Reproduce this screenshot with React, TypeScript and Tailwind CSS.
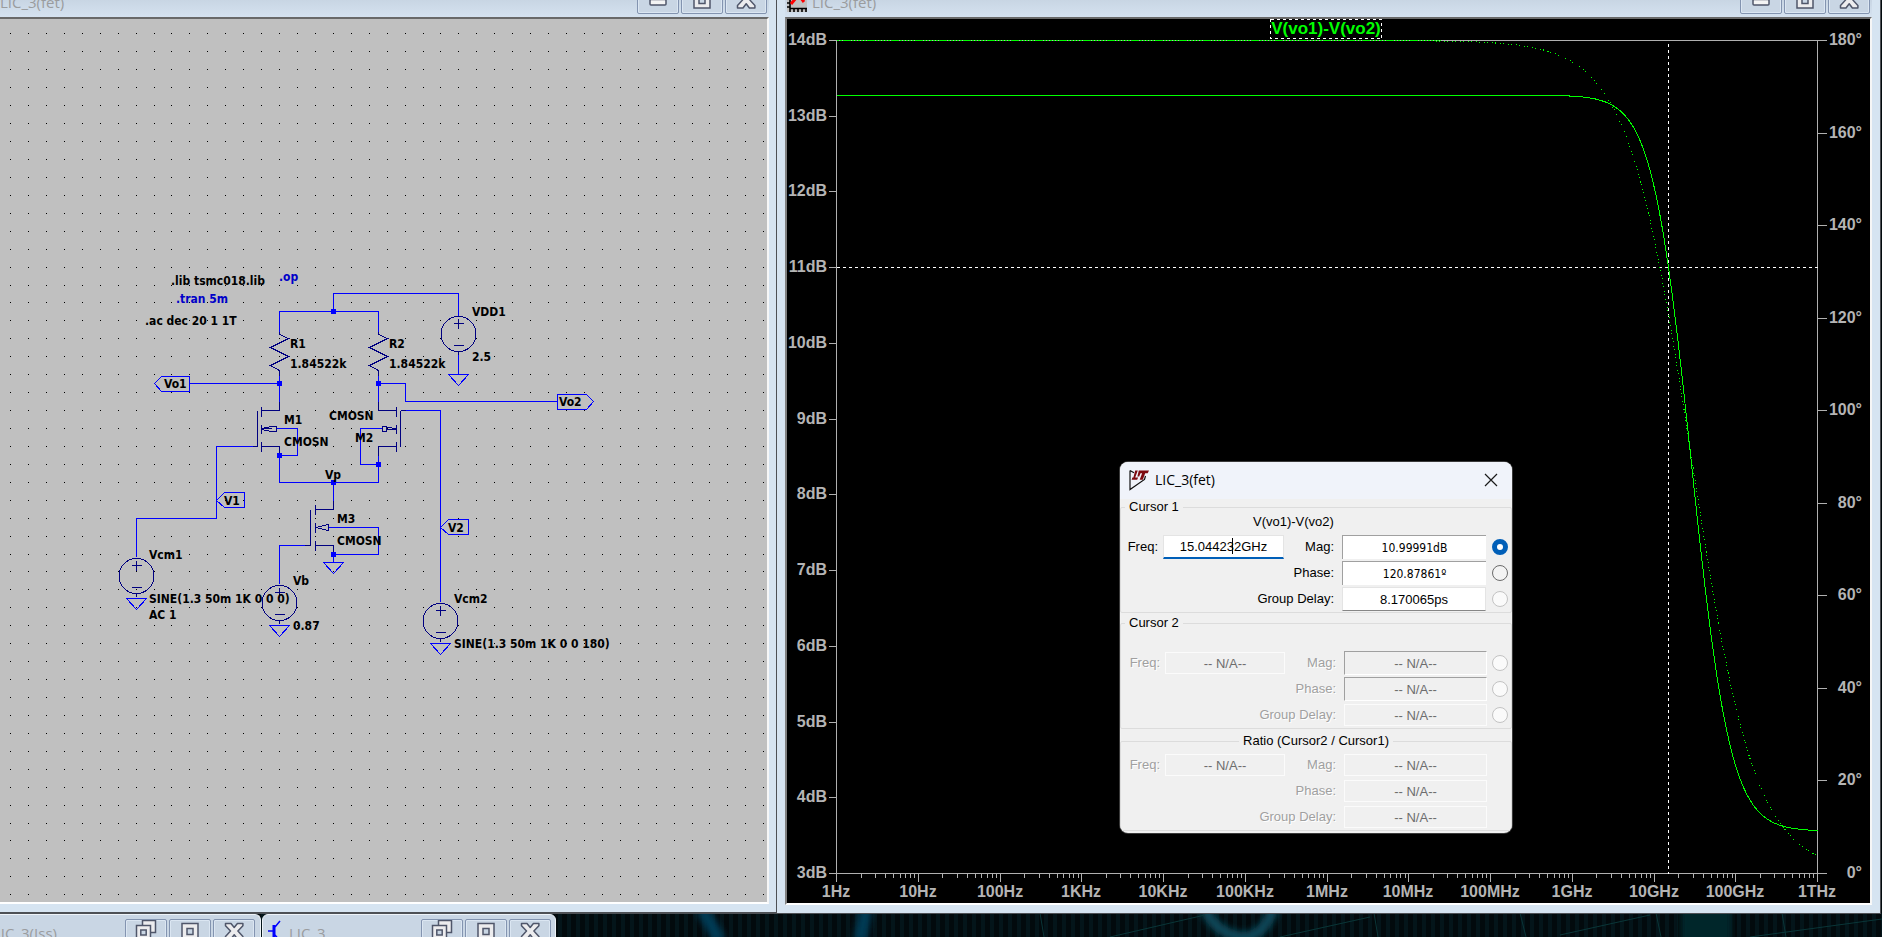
import React from "react";

/* ---------- window chrome ---------- */

type Glyph = "min" | "max" | "close" | "restore";

function CaptionGlyph({ kind }: { kind: Glyph }) {
  return (
    <svg width="20" height="22" viewBox="0 0 20 22" className="block overflow-visible" aria-hidden="true">
      {kind === "min" && <rect x="2" y="9.5" width="16" height="5.5" rx="1" fill="#f4f4f4" stroke="#4f566a" strokeWidth="1.5" />}
      {kind === "max" && (
        <g fill="#ececee" stroke="#4f566a" strokeWidth="1.5">
          <path fillRule="evenodd" d="M2 2.5h16v15.5h-16zM7 7.5v6h6v-6z" />
        </g>
      )}
      {kind === "restore" && (
        <g fill="#ececee" stroke="#4f566a" strokeWidth="1.5">
          <path d="M6.5 -0.5h13v12h-13z" />
          <path d="M0.5 4.5h14v14h-14z" />
          <path d="M4.8 9h5.4v5h-5.4z" fill="#c9d6e4" />
        </g>
      )}
      {kind === "close" && (
        <path
          d="M1.5 2.5h5.5l3.2 4 3.2-4h5.5v2.2l-5 5.4 5 5.4v2.5h-5.5l-3.2-4.2-3.2 4.2h-5.5v-2.5l5-5.4-5-5.4z"
          fill="#ececee"
          stroke="#4f566a"
          strokeWidth="1.5"
          strokeLinejoin="round"
        />
      )}
    </svg>
  );
}

function CaptionButtons({ kinds }: { kinds: Glyph[] }) {
  return (
    <div className="mr-[2px] mt-1 flex shrink-0 gap-[2px]">
      {kinds.map((k) => (
        <button
          key={k}
          type="button"
          aria-label={k}
          className="flex h-[26px] w-[42px] items-center justify-center overflow-hidden rounded-[2px] border border-[#8394b0] bg-[#c9d6e4] shadow-[inset_0_0_0_1px_#dbe6f2]"
        >
          <CaptionGlyph kind={k} />
        </button>
      ))}
    </div>
  );
}

function TitleText({ children }: { children: React.ReactNode }) {
  return (
    <span className="grow whitespace-nowrap pt-2 font-['Open_Sans',sans-serif] text-[15px] leading-5 text-[#9a9c9e]">
      {children}
    </span>
  );
}

function PlotIcon() {
  return (
    <svg width="20" height="20" viewBox="0 0 20 20" className="mt-2 block shrink-0" aria-hidden="true">
      <rect x="0" y="0" width="20" height="20" fill="#c0c0c0" />
      <path d="M3 0v17M3 16.5h17M0 3h3M0 7h3M0 11h3M0 15h3M3 16v4M7 16v4M11 16v4M15 16v4M19 16v4" stroke="#000" strokeWidth="1.6" />
      <path d="M4 12l5-6h5l3 4" stroke="#f00" strokeWidth="3" fill="none" />
    </svg>
  );
}

function TransistorIcon() {
  return (
    <svg width="16" height="22" viewBox="0 0 16 22" className="mt-1 block shrink-0" aria-hidden="true">
      <path d="M0 12h5M7 8l5-6M7 16l5 6" stroke="#00f" strokeWidth="1.5" fill="none" />
      <path d="M6 6v12" stroke="#00f" strokeWidth="3" />
    </svg>
  );
}

/* ---------- schematic ---------- */

const PITCH = 17.934;
const gridX = Array.from({ length: 43 }, (_, i) => Math.round(10.05 + PITCH * i));
const gridY = Array.from({ length: 49 }, (_, i) => Math.round(33.43 + PITCH * i));
const gridDots = gridY.map((y) => gridX.map((x) => `M${x} ${y}h1v1h-1z`).join("")).join("");

const wires = [
  "M333 311V293H458V316",
  "M279 331V311H378V331",
  "M458 354V374",
  "M189 383H279V401",
  "M279 374V383M378 374V401M378 383H405V401H557",
  "M257 446H216V518H136V556",
  "M276 428H297V455H279V482H378V464H360V428H382",
  "M400 410H440V601",
  "M333 482V500M310 545H279V583",
  "M328 527H378V554H333V562",
  "M378 455V464",
];

const parts = [
  "M279 331V334L288 338L270 347L288 356L270 365L279 370V375",
  "M378 331V334L387 338L369 347L387 356L369 365L378 370V375",
  "M279 401V410H261M261 406V416M261 424V433M261 441V451M261 446H279V455M257 410V446H252",
  "M261 428H271M261 428L271 426H276V431H271L261 429",
  "M378 401V410H396M396 406V416M396 424V433M396 441V451M396 446H378V455M400 410V446M400 410H405",
  "M396 428L386 427H391M386 426H382V431H386ZM386 429H396",
  "M333 500V509H315M315 504V514M315 522V532M315 540V550M315 545H333V554M310 509V545H304",
  "M315 527L328 524V530Z",
];

const flags = [
  "M154 383L161 376H189V391H161Z",
  "M216 500L224 492H244V507H224Z",
  "M440 527L448 519H468V534H448Z",
  "M557 394H586L593 401L586 409H557Z",
];

const junctions = [
  [333, 311],
  [279, 383],
  [378, 383],
  [279, 455],
  [378, 464],
  [333, 482],
  [333, 554],
];

const sources = [
  { x: 458, y: 333.5, g: 374 },
  { x: 136, y: 575.5, g: 598 },
  { x: 279, y: 602.5, g: 625 },
  { x: 440, y: 620.5, g: 643 },
];

const labels: [number, number, string, string?][] = [
  [171, 285, ".lib tsmc018.lib"],
  [279, 281, ".op", "#0000c8"],
  [176, 303, ".tran 5m", "#0000c8"],
  [145, 325, ".ac dec 20 1 1T"],
  [472, 316, "VDD1"],
  [472, 361, "2.5"],
  [290, 348, "R1"],
  [290, 368, "1.84522k"],
  [389, 348, "R2"],
  [389, 368, "1.84522k"],
  [164, 388, "Vo1"],
  [559, 406, "Vo2"],
  [329, 420, "CMOSN"],
  [284, 424, "M1"],
  [284, 446, "CMOSN"],
  [355, 442, "M2"],
  [325, 479, "Vp"],
  [224, 505, "V1"],
  [448, 532, "V2"],
  [337, 523, "M3"],
  [337, 545, "CMOSN"],
  [149, 559, "Vcm1"],
  [149, 603, "SINE(1.3 50m 1K 0 0 0)"],
  [149, 619, "AC 1"],
  [293, 585, "Vb"],
  [293, 630, "0.87"],
  [454, 603, "Vcm2"],
  [454, 648, "SINE(1.3 50m 1K 0 0 180)"],
];

function Schematic() {
  return (
    <svg viewBox="0 19 767 884" preserveAspectRatio="xMinYMin slice" className="block h-full w-full" role="img" aria-label="Schematic">
      <path d={gridDots} fill="#000" shapeRendering="crispEdges" />
      <g transform="translate(0.5 0.5)" fill="none" strokeWidth="1" shapeRendering="crispEdges">
        <path d={wires.join("")} stroke="#0000ff" />
        <path d={flags.join("")} stroke="#0000ff" />
        <path d={parts.join("")} stroke="#000080" />
        {sources.map((s) => (
          <g key={s.x} stroke="#000080">
            <circle cx={s.x} cy={s.y} r="17.5" />
            <path d={`M${s.x - 5} ${Math.floor(s.y) - 10}h10m-5 -5v10M${s.x - 5} ${Math.floor(s.y) + 12}h10M${s.x} ${s.y + 17}v4`} />
          </g>
        ))}
        {[...sources.map((s) => [s.x, s.g]), [333, 562]].map(([x, y]) => (
          <path key={`${x}-${y}`} d={`M${x - 10} ${y}h20l-10 11z`} stroke="#0000ff" />
        ))}
      </g>
      {junctions.map(([x, y]) => (
        <rect key={`${x}-${y}`} x={x - 2} y={y - 2} width="5" height="5" fill="#0000ff" />
      ))}
      <g className="font-['DejaVu_Sans_Condensed','DejaVu_Sans',sans-serif] text-[12px] font-bold">
        {labels.map(([x, y, t, c], i) => (
          <text key={i} x={x} y={y} fill={c ?? "#000"}>
            {t}
          </text>
        ))}
      </g>
    </svg>
  );
}

/* ---------- frequency response plot ---------- */

const PLOT = { left: 836, right: 1817, top: 40, bottom: 873 };
const DECADES = 12;
const freqLabels = ["1Hz", "10Hz", "100Hz", "1KHz", "10KHz", "100KHz", "1MHz", "10MHz", "100MHz", "1GHz", "10GHz", "100GHz", "1THz"];
const magLabels = Array.from({ length: 12 }, (_, i) => 14 - i);
const phaseLabels = Array.from({ length: 10 }, (_, i) => 180 - 20 * i);

const POLE = 16.39e9;
const ZERO = 50.2e9;
const DC_GAIN = 13.28;

const xOf = (decade: number) => PLOT.left + ((PLOT.right - PLOT.left) * decade) / DECADES;
const magY = (db: number) => PLOT.top + ((14 - db) * (PLOT.bottom - PLOT.top)) / 11;
const phaseY = (deg: number) => PLOT.top + ((180 - deg) * (PLOT.bottom - PLOT.top)) / 180;

function curve(value: (f: number) => number) {
  const points: string[] = [];
  for (let x = PLOT.left; x <= PLOT.right; x += 1) {
    const f = Math.pow(10, ((x - PLOT.left) / (PLOT.right - PLOT.left)) * DECADES);
    points.push(`${x},${value(f).toFixed(1)}`);
  }
  return points.join(" ");
}

const magCurve = curve((f) => magY(DC_GAIN + 10 * Math.log10((1 + (f / ZERO) ** 2) / (1 + (f / POLE) ** 2))));
const phaseCurve = curve((f) => phaseY(180 - ((Math.atan(f / ZERO) + Math.atan(f / POLE)) * 180) / Math.PI));

function minorTicks() {
  let d = "";
  for (let k = 0; k < DECADES; k += 1) {
    for (let n = 2; n < 10; n += 1) d += `M${Math.round(xOf(k + Math.log10(n)))} ${PLOT.bottom}v4`;
  }
  return d;
}

function Plot() {
  return (
    <svg viewBox="787 19 1083 884" preserveAspectRatio="xMinYMin meet" className="block h-full w-full" role="img" aria-label="V(vo1)-V(vo2) frequency response">
      <g transform="translate(0.5 0.5)" fill="none" stroke="#b0b0b0" shapeRendering="crispEdges">
        <path d={`M${PLOT.left} ${PLOT.top}H${PLOT.right}V${PLOT.bottom}H${PLOT.left}Z`} />
        <path d={magLabels.map((m) => `M828 ${Math.round(magY(m))}H836`).join("")} />
        <path d={phaseLabels.map((p) => `M1817 ${Math.round(phaseY(p))}H1826`).join("")} />
        <path d={freqLabels.map((_, i) => `M${Math.round(xOf(i))} ${PLOT.bottom}v8`).join("")} />
        <path d={minorTicks()} />
        <path d={`M1668 43V${PLOT.bottom}`} stroke="#fff" strokeDasharray="3 3" />
        <path d={`M${PLOT.left} 267H${PLOT.right}`} stroke="#fff" strokeDasharray="3 3" />
        <polyline points={phaseCurve} stroke="#00ff00" strokeDasharray="1 2 1 4" />
        <path d={`M${PLOT.left} ${PLOT.top}H1440`} stroke="#00ff00" strokeDasharray="2 1" />
        <polyline points={magCurve} stroke="#00ff00" />
        <rect x="1270" y="19" width="111" height="19" stroke="#fff" strokeDasharray="3 3" />
      </g>
      <g className="font-['Liberation_Sans',Arial,sans-serif] text-[16px] font-bold" fill="#b4b4b4">
        {magLabels.map((m) => (
          <text key={m} x="827" y={Math.round(magY(m)) + 5} textAnchor="end">
            {m}dB
          </text>
        ))}
        {phaseLabels.map((p) => (
          <text key={p} x="1862" y={Math.round(phaseY(p)) + 5} textAnchor="end">
            {p}°
          </text>
        ))}
        {freqLabels.map((t, i) => (
          <text key={t} x={Math.round(xOf(i))} y="897" textAnchor="middle">
            {t}
          </text>
        ))}
        <text x="1326" y="34" textAnchor="middle" fill="#00ff00" className="text-[17px]">
          V(vo1)-V(vo2)
        </text>
      </g>
    </svg>
  );
}

/* ---------- cursor dialog ---------- */

const NA = "-- N/A--";

type FieldStyle = "focus" | "sunken" | "flat" | "sunkenOff" | "flatOff";

const fieldStyles: Record<FieldStyle, string> = {
  focus: "h-6 bg-white border border-[#e4e4e4] border-b-2 border-b-[#005fb8] text-black text-[13px] font-['Liberation_Sans',Arial,sans-serif]",
  sunken: "h-6 bg-white border-t border-l border-t-[#a0a0a0] border-l-[#a0a0a0] text-black text-[12px] font-['DejaVu_Sans_Condensed','DejaVu_Sans',sans-serif]",
  flat: "h-6 bg-white border border-[#e4e4e4] border-b-[#868686] text-black text-[13px] font-['Liberation_Sans',Arial,sans-serif]",
  sunkenOff:
    "h-6 bg-[#f0f0f0] border border-white border-t-[#a0a0a0] border-l-[#a0a0a0] text-[#6d6d6d] text-[13px] font-['Liberation_Sans',Arial,sans-serif]",
  flatOff: "h-[22px] bg-[#f0f0f0] border border-[#fbfbfb] text-[#6d6d6d] text-[13px] font-['Liberation_Sans',Arial,sans-serif]",
};

function Field({ id, value, look }: { id: string; value: string; look: FieldStyle }) {
  const off = look === "flatOff" || look === "sunkenOff";
  return (
    <input
      id={id}
      type="text"
      defaultValue={value}
      disabled={off}
      className={`w-full min-w-0 rounded-none text-center outline-none ${fieldStyles[look]}`}
    />
  );
}

function Label({ htmlFor, off, children }: { htmlFor: string; off: boolean; children: React.ReactNode }) {
  return (
    <label
      htmlFor={htmlFor}
      className={
        off
          ? "whitespace-nowrap pr-2 text-right text-[#a0a0a0] [text-shadow:1px_1px_0_#fff]"
          : "whitespace-nowrap pr-2 text-right text-black"
      }
    >
      {children}
    </label>
  );
}

type Group = {
  id: string;
  legend: string;
  centered?: boolean;
  heading?: string;
  off: boolean;
  freq: string;
  freqLook: FieldStyle;
  rows: { name: string; value: string; look: FieldStyle; radio?: "on" | "idle" | "off" }[];
};

const groups: Group[] = [
  {
    id: "c1",
    legend: "Cursor 1",
    heading: "V(vo1)-V(vo2)",
    off: false,
    freq: "15.044232GHz",
    freqLook: "focus",
    rows: [
      { name: "Mag:", value: "10.99991dB", look: "sunken", radio: "on" },
      { name: "Phase:", value: "120.87861º", look: "sunken", radio: "idle" },
      { name: "Group Delay:", value: "8.170065ps", look: "flat", radio: "off" },
    ],
  },
  {
    id: "c2",
    legend: "Cursor 2",
    heading: "",
    off: true,
    freq: NA,
    freqLook: "flatOff",
    rows: [
      { name: "Mag:", value: NA, look: "sunkenOff", radio: "off" },
      { name: "Phase:", value: NA, look: "sunkenOff", radio: "off" },
      { name: "Group Delay:", value: NA, look: "flatOff", radio: "off" },
    ],
  },
  {
    id: "ratio",
    legend: "Ratio (Cursor2 / Cursor1)",
    centered: true,
    off: true,
    freq: NA,
    freqLook: "flatOff",
    rows: [
      { name: "Mag:", value: NA, look: "flatOff" },
      { name: "Phase:", value: NA, look: "flatOff" },
      { name: "Group Delay:", value: NA, look: "flatOff" },
    ],
  },
];

const radioStyles = {
  on: "border-[5px] border-[#005fb8] bg-white",
  idle: "border border-[#6b6b6b] bg-[#f3f3f3]",
  off: "border border-[#c3c3c3] bg-[#fafafa]",
};

function CursorGroup({ group }: { group: Group }) {
  return (
    <fieldset className="min-w-0 rounded-[2px] border border-[#dcdcdc]">
      <legend className={group.centered ? "mx-auto px-1 leading-4" : "ml-1 px-1 leading-4"}>{group.legend}</legend>
      {group.heading !== undefined ? (
        <div className="h-[19px] pl-[132px] leading-[13px]">{group.heading}</div>
      ) : (
        <div className="h-[3px]" />
      )}
      {group.rows.map((row, i) => {
        const id = `${group.id}-${i}`;
        return (
          <div
            key={id}
            className={
              group.off
                ? "grid h-[26px] grid-cols-[44px_120px_59px_143px_1fr] items-center"
                : "grid h-[26px] grid-cols-[42px_121px_58px_144px_1fr] items-center"
            }
          >
            {i === 0 ? (
              <>
                <label
                  htmlFor={`${group.id}-freq`}
                  className={group.off ? "pr-[5px] text-right text-[#a0a0a0] [text-shadow:1px_1px_0_#fff]" : "pr-[5px] text-right text-black"}
                >
                  Freq:
                </label>
                <div className="relative flex">
                  <Field id={`${group.id}-freq`} value={group.freq} look={group.freqLook} />
                  {group.freqLook === "focus" && <span className="absolute left-[69px] top-[3px] h-4 w-px bg-black" />}
                </div>
                <Label htmlFor={id} off={group.off}>
                  {row.name}
                </Label>
              </>
            ) : (
              <div className="col-span-3 flex justify-end">
                <Label htmlFor={id} off={group.off}>
                  {row.name}
                </Label>
              </div>
            )}
            <Field id={id} value={row.value} look={row.look} />
            {row.radio && (
              <input
                type="radio"
                name={`${group.id}-pick`}
                aria-label={`${group.legend} ${row.name}`}
                defaultChecked={row.radio === "on"}
                disabled={row.radio === "off"}
                className={`ml-auto mr-[3px] size-4 appearance-none rounded-full ${radioStyles[row.radio]}`}
              />
            )}
          </div>
        );
      })}
    </fieldset>
  );
}

function CursorDialog() {
  return (
    <section
      role="dialog"
      aria-label="LIC_3(fet)"
      className="absolute left-[1120px] top-[462px] w-[392px] overflow-hidden rounded-lg bg-[#f0f0f0] font-['Liberation_Sans',Arial,sans-serif] text-[13px] text-black shadow-[0_0_0_1px_#3a3a3a]"
    >
      <header className="flex h-[37px] items-center bg-[#f0f3fa] pb-px pl-2 pr-3">
        <svg width="22" height="22" viewBox="0 0 22 22" aria-hidden="true">
          <path d="M2 1.5V20.5L16.5 10.5L17.5 7M2 1.5L6 3.8" fill="none" stroke="#111" strokeWidth="1.2" />
          <path d="M7.2 1.5h2.6L7.2 8.4h2.9l-.9 2.3H3.6l.8-2.1h1z" fill="#7d0a10" />
          <path d="M10.8 1.5H21l-1.3 2.8h-2.5l-2.4 6.4h-3.1l2.4-6.4h-1.6l-1.3 3.3H9.4z" fill="#7d0a10" />
        </svg>
        <h2 className="grow pl-[5px] font-['Open_Sans',sans-serif] text-[14px] leading-5">LIC_3(fet)</h2>
        <button type="button" aria-label="Close" className="flex size-[18px] items-center justify-center">
          <svg width="14" height="14" viewBox="0 0 14 14" aria-hidden="true">
            <path d="M1 1l12 12M13 1L1 13" stroke="#1a1a1a" strokeWidth="1.2" />
          </svg>
        </button>
      </header>
      <div className="flex flex-col gap-[2px] pb-[2px]">
        <CursorGroup group={groups[0]} />
        <CursorGroup group={groups[1]} />
        <div />
        <CursorGroup group={groups[2]} />
      </div>
    </section>
  );
}

/* ---------- desktop ---------- */

function Wallpaper() {
  return (
    <svg viewBox="0 0 1882 24" preserveAspectRatio="xMinYMax slice" className="absolute inset-x-0 bottom-0 h-6 w-full" aria-hidden="true">
      <defs>
        <pattern id="bars" width="9" height="24" patternUnits="userSpaceOnUse">
          <rect width="4" height="24" fill="#04151a" />
        </pattern>
        <filter id="soft" x="-20%" width="140%" y="-50%" height="200%">
          <feGaussianBlur stdDeviation="3" />
        </filter>
      </defs>
      <rect width="1882" height="24" fill="#020a0d" />
      <rect width="1882" height="24" fill="url(#bars)" />
      <g filter="url(#soft)" fill="none">
        <path d="M702 -4L720 28M866 -4L860 28" stroke="#063a55" strokeWidth="13" />
        <path d="M1205 -4C1213 14 1228 24 1246 24C1262 22 1268 8 1274 -4" stroke="#084758" strokeWidth="11" />
        <path d="M1706 -4V28" stroke="#06262c" strokeWidth="50" />
      </g>
      <g fill="none" stroke="#0a3638">
        <path d="M1110 24L1205 2M1040 0L1044 24M1374 0L1378 24M1520 0L1526 24M1656 0L1661 24M1782 0L1786 24M1280 24L1370 4M1560 22L1650 2M1750 24L1882 6" />
      </g>
    </svg>
  );
}

export default function App() {
  return (
    <div className="relative h-screen overflow-hidden bg-[#020a0d]">
      <Wallpaper />
      <div className="relative -mt-4 flex h-[calc(100vh+16px)] flex-col">
        <main className="flex min-h-0 flex-1">
          <section className="flex w-[777px] shrink-0 flex-col border-b-2 border-r border-[#4d5055] bg-[#d6e4f1] pb-2 pr-[7px]">
            <header className="flex h-[33px] shrink-0 bg-linear-to-b from-[#bccad8] to-[#d5e2f0]">
              <TitleText>LIC_3(fet)</TitleText>
              <CaptionButtons kinds={["min", "max", "close"]} />
            </header>
            <div className="min-h-0 flex-1 border-b-2 border-r-2 border-t-2 border-b-white border-r-[#f6f6f6] border-t-[#696969] bg-[#c0c0c0]">
              <Schematic />
            </div>
          </section>
          <section className="mr-px flex min-w-0 flex-1 flex-col border-b border-r border-[#4d5055] bg-[#d6e4f1] pb-2 pl-2 pr-2">
            <header className="flex h-[33px] shrink-0 gap-[5px] bg-linear-to-b from-[#bccad8] to-[#d5e2f0] pl-[2px]">
              <PlotIcon />
              <TitleText>LIC_3(fet)</TitleText>
              <CaptionButtons kinds={["min", "max", "close"]} />
            </header>
            <div className="min-h-0 flex-1 border-2 border-b-white border-l-[#808080] border-r-[#f6f6f6] border-t-[#696969] bg-black">
              <Plot />
            </div>
          </section>
        </main>
        <footer className="flex h-[23px] shrink-0 overflow-hidden">
          <section className="h-10 w-[261px] shrink-0 overflow-hidden rounded-tr-md border-r border-t border-[#eef3f8] bg-[#c9d6e4] pr-[3px]">
            <header className="flex">
              <div className="-ml-[7px] flex grow">
                <TitleText>LIC_3(Iss)</TitleText>
              </div>
              <CaptionButtons kinds={["restore", "max", "close"]} />
            </header>
          </section>
          <section className="ml-px h-10 w-[294px] shrink-0 overflow-hidden rounded-t-md border border-[#eef3f8] bg-[#c9d6e4] pl-[5px] pr-[2px]">
            <header className="flex gap-[5px]">
              <TransistorIcon />
              <TitleText>LIC_3</TitleText>
              <CaptionButtons kinds={["restore", "max", "close"]} />
            </header>
          </section>
        </footer>
      </div>
      <CursorDialog />
    </div>
  );
}
